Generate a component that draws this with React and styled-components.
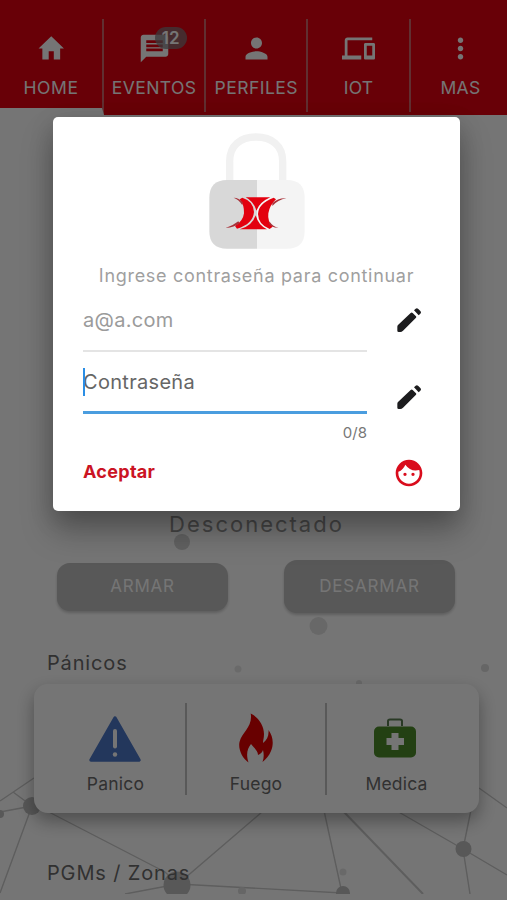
import { MdHome, MdMessage, MdPerson, MdDevices, MdMoreVert, MdFace } from 'react-icons/md';
import styled, { createGlobalStyle } from 'styled-components';

const TABS = [
    { label: 'HOME', icon: MdHome, active: true, iconWidth: 30.5, spacing: 0.6 },
    { label: 'EVENTOS', icon: MdMessage, badge: 12, spacing: 0.4 },
    { label: 'PERFILES', icon: MdPerson, spacing: 0.5 },
    { label: 'IOT', icon: MdDevices, spacing: 0.2 },
    { label: 'MAS', icon: MdMoreVert, spacing: 0.4 },
];

const Tab = ({ tab }) => {
    const Icon = tab.icon;
    return (
        <StyledTab $active={tab.active}>
            <StyledTabIcon $width={tab.iconWidth}>
                <Icon preserveAspectRatio='none' />
                {tab.badge && <StyledBadge>{tab.badge}</StyledBadge>}
            </StyledTabIcon>
            <StyledTabLabel $spacing={tab.spacing}>{tab.label}</StyledTabLabel>
        </StyledTab>
    );
}

const Network = () => (
    <StyledNetwork width='507' height='894' viewBox='0 0 507 894'>
        <g stroke='#cccccc' strokeWidth='1.4' fill='none'>
            <path d='M0 801 L34 778 M13 792 L32 806 L0 812 M32 806 L0 893' />
            <path d='M45 810 L165 872 L178 884 L262 812 M178 884 L125 894 M178 884 L342 893 L323 806' />
            <path d='M344 812 L423 894' strokeWidth='2' />
            <path d='M390 807 L463 849 L507 875 M463 849 L470 894 M463 849 L472 805 M479 788 L507 808' />
        </g>
        <g fill='#d3d3d3'>
            <circle cx='182' cy='542' r='8' />
            <circle cx='318.500' cy='626' r='9' fill='#e3e3e3' />
            <circle cx='238' cy='669' r='3.500' fill='#e8e8e8' />
            <circle cx='359' cy='683' r='3' fill='#e4e4e4' />
            <circle cx='485' cy='668' r='4' fill='#dedede' />
        </g>
        <g fill='#bfbfbf'>
            <circle cx='32' cy='806' r='9' />
            <circle cx='0' cy='814' r='4' />
            <circle cx='177' cy='885' r='13.500' />
            <circle cx='463.500' cy='849' r='8' />
            <circle cx='343' cy='893' r='7' />
            <circle cx='343' cy='872' r='3.500' fill='#e4e4e4' />
            <circle cx='242' cy='891' r='4' fill='#dedede' />
        </g>
    </StyledNetwork>
);

const LockLogo = () => (
    <StyledLock viewBox='50 30 300 366'>
        <path d='M118 190 V124 C118 76 150 51 197 51 C244 51 277 76 277 124 V190' fill='none' stroke='#f1f1f1' strokeWidth='22' />
        <path d='M200 180 H110 Q57 180 57 234 V333 Q57 386 110 386 H200 Z' fill='#d8d8d8' />
        <path d='M200 180 H290 Q343 180 343 234 V333 Q343 386 290 386 H200 Z' fill='#f4f4f4' />
        <g fill='#e3000f'>
            <path d='M166 232 H240 Q208 246 198 272 Q190 244 166 232 Z' />
            <path d='M196 286 Q204 316 230 328 H148 Q186 318 196 286 Z' />
            <path d='M156 233 Q190 244 191 276 Q188 312 140 326 L134 318 Q158 304 161 280 Q162 255 148 238 Z' />
            <path d='M250 233 Q204 250 203 282 Q204 314 238 327 L247 320 Q231 304 234 280 Q238 256 257 238 Z' />
        </g>
        <g fill='#a8323a'>
            <path d='M130 233 Q146 233 158 248 L155 254 Q146 239 130 233 Z' />
            <path d='M106 324 Q128 317 144 304 L148 310 Q132 322 106 324 Z' />
            <path d='M288 235 Q264 233 246 250 L246 258 Q262 240 288 235 Z' />
            <path d='M264 323 Q248 320 238 305 L236 311 Q246 324 264 323 Z' />
        </g>
    </StyledLock>
);

const PencilIcon = ({ top }) => (
    <StyledPencil $top={top} viewBox='380 54 72 72'>
        <path d='M381 110 Q381 107 383 105 L421 69 Q424 66 427 69 L437 79 Q439 81 437 83 L398 122 Q394 126 390 126 H385 Q381 126 381 122 Z' />
        <path d='M431 61 L436 56 Q440 53 444 57 L450 63 Q454 67 450 71 L445 76 Z' />
    </StyledPencil>
);

const PanicIcon = () => (
    <svg width='54' height='50' viewBox='0 0 54 50'>
        <path d='M26 5 L50 47 H2 Z' fill='#4e78c8' stroke='#4e78c8' strokeWidth='3.500' strokeLinejoin='round' />
        <path d='M26 18 V33.500' stroke='#fff' strokeWidth='4' strokeLinecap='round' />
        <circle cx='26' cy='41.500' r='2.200' fill='#fff' />
    </svg>
);

const FireIcon = () => (
    <svg width='36' height='50' viewBox='0 0 36 50'>
        <path
            d='M12.700 0.500 C20 4 26 12 26 21 C26 25 25 27 25 30 C29 27 31 23 30.500 17 C35 23 36 31 33 38 C31 43 28 46 24.500 49 C26 45 26 41 25 37 C24 40 22 41 20 42 C20 38 17 36 13 31 C9 36 8 42 10.500 49.500 C4 45 0 36 1.500 29 C4 19 15 14 12.700 0.500 Z'
            fill='#e30000'
        />
    </svg>
);

const MedicIcon = () => (
    <svg width='45' height='40' viewBox='0 0 45 40'>
        <path d='M14 8 V3 Q14 1.500 16 1.500 H26 Q28 1.500 28 3 V8' fill='none' stroke='#5a7d52' strokeWidth='2' />
        <rect x='0' y='8.500' width='42' height='31' rx='5' fill='#4c8b2b' />
        <path d='M17.500 15 H24.500 V20 H30 V27 H24.500 V32 H17.500 V27 H12.500 V20 H17.500 Z' fill='#fff' />
    </svg>
);

const PANICS = [
    { label: 'Panico', icon: PanicIcon },
    { label: 'Fuego', icon: FireIcon },
    { label: 'Medica', icon: MedicIcon },
];

const PasswordDialog = () => (
    <StyledDialog>
        <LockLogo />
        <StyledDialogTitle>Ingrese contraseña para continuar</StyledDialogTitle>
        <StyledFieldRow $height={53}>
            <StyledField>a@a.com</StyledField>
            <PencilIcon top={9} />
        </StyledFieldRow>
        <StyledFieldRow $height={62}>
            <StyledField $focused>
                <StyledCaret />
                Contraseña
            </StyledField>
            <PencilIcon top={33} />
        </StyledFieldRow>
        <StyledCounter>0/8</StyledCounter>
        <StyledActions>
            <StyledAccept>Aceptar</StyledAccept>
            <MdFace size={32} />
        </StyledActions>
    </StyledDialog>
);

const App = () => {
    return (
        <StyledPage>
            <GlobalStyle />
            <Network />
            <StyledTabBar>
                {TABS.map((tab) => <Tab key={tab.label} tab={tab} />)}
            </StyledTabBar>
            <StyledMain>
                <StyledStatus>Desconectado</StyledStatus>
                <StyledArmRow>
                    <StyledArmButton $height={48}>ARMAR</StyledArmButton>
                    <StyledArmButton $height={53}>DESARMAR</StyledArmButton>
                </StyledArmRow>
                <StyledSectionTitle>Pánicos</StyledSectionTitle>
                <StyledPanicCard>
                    {PANICS.map(({ label, icon: Icon }) => (
                        <StyledPanicItem key={label}>
                            <StyledPanicIcon><Icon /></StyledPanicIcon>
                            {label}
                        </StyledPanicItem>
                    ))}
                </StyledPanicCard>
                <StyledSectionTitle>PGMs / Zonas</StyledSectionTitle>
            </StyledMain>
            <StyledScrim>
                <PasswordDialog />
            </StyledScrim>
        </StyledPage>
    );
}

const GlobalStyle = createGlobalStyle`
    body {
        margin: 0;
        overflow: hidden;
        font-family: Inter, 'Liberation Sans', sans-serif;
    }

    * {
        box-sizing: border-box;
    }
`;

const StyledPage = styled.div`
    position: relative;
    width: 507px;
    height: 900px;
    overflow: hidden;
    background-color: #ffffff;
`;

const StyledNetwork = styled.svg`
    position: absolute;
    top: 0;
    left: 0;
`;

const StyledTabBar = styled.nav`
    position: relative;
    display: grid;
    grid-template-columns: 104px repeat(3, 102.2px) 100px;
    width: 507px;
    height: 115px;
    padding-top: 19px;
    overflow: hidden;
    background-color: #e20010;
`;

const StyledTab = styled.div`
    display: flex;
    flex-direction: column;
    align-items: center;
    height: ${({ $active }) => ($active ? 96 : 93)}px;
    padding-top: 12.5px;
    border-right: 2px solid #d4686c;
    border-bottom: ${({ $active }) => ($active ? '7px solid #ffffff' : 'none')};
    color: #ffffff;

    &:last-child {
        border-right: none;
    }
`;

const StyledTabIcon = styled.div`
    position: relative;
    height: 33px;

    > svg {
        display: block;
        width: ${({ $width }) => $width || 33}px;
        height: 33px;
    }
`;

const StyledBadge = styled.span`
    position: absolute;
    top: -5px;
    left: 17px;
    width: 32px;
    height: 22px;
    border-radius: 11px;
    background-color: rgba(130, 125, 130, 0.75);
    font-size: 17px;
    font-weight: 600;
    line-height: 22px;
    text-align: center;
`;

const StyledTabLabel = styled.span`
    margin-top: 12px;
    font-size: 17.5px;
    line-height: 22px;
    letter-spacing: ${({ $spacing }) => $spacing}px;
    white-space: nowrap;
`;

const StyledMain = styled.main`
    position: relative;
    display: flex;
    flex-direction: column;
    padding: 395px 28px 0 34px;
`;

const StyledStatus = styled.div`
    height: 30px;
    font-size: 22px;
    line-height: 29px;
    letter-spacing: 2px;
    text-align: center;
    color: #979797;
`;

const StyledArmRow = styled.div`
    display: flex;
    justify-content: space-between;
    align-items: center;
    height: 53px;
    margin: 20px 24px 0 23px;
`;

const StyledArmButton = styled.button`
    width: 171px;
    height: ${({ $height }) => $height}px;
    padding: 0 0 2px;
    border: none;
    border-radius: 13px;
    background-color: #bfbfbf;
    box-shadow: 0 2px 3px rgba(0, 0, 0, 0.2);
    font-family: inherit;
    font-size: 17px;
    letter-spacing: 0.8px;
    color: #ffffff;
`;

const StyledSectionTitle = styled.h2`
    height: 30px;
    margin: 35px 0 0 13px;
    font-size: 20px;
    font-weight: 400;
    line-height: 30px;
    letter-spacing: 0.85px;
    color: #6c6c6c;
`;

const StyledPanicCard = styled.section`
    display: grid;
    grid-template-columns: 153px 140px 1fr;
    width: 445px;
    height: 129px;
    margin: 6px 0 9px;
    padding: 19px 0;
    border-radius: 14px;
    background-color: #ffffff;
    box-shadow: 0 8px 18px rgba(0, 0, 0, 0.34);

    & + h2 {
        margin-top: 36px;
    }
`;

const StyledPanicItem = styled.div`
    display: flex;
    flex-direction: column;
    align-items: center;
    border-right: 2px solid #c3c3c3;
    font-size: 17.5px;
    line-height: 22px;
    letter-spacing: 0.2px;
    color: #6c6c6c;

    &:first-child {
        padding-left: 12px;
    }

    &:last-child {
        padding-right: 13px;
        border-right: none;
    }
`;

const StyledPanicIcon = styled.div`
    display: flex;
    justify-content: center;
    align-items: center;
    height: 70px;
`;

const StyledScrim = styled.div`
    position: absolute;
    inset: 0;
    padding: 117px 47px 0 53px;
    background-color: rgba(0, 0, 0, 0.54);
`;

const StyledDialog = styled.section`
    display: flex;
    flex-direction: column;
    width: 407px;
    height: 394px;
    padding: 13px 30px 0;
    border-radius: 5px;
    background-color: #ffffff;
    box-shadow: 0 20px 32px rgba(0, 0, 0, 0.26), 0 8px 24px rgba(0, 0, 0, 0.16);
`;

const StyledLock = styled.svg`
    align-self: center;
    width: 100px;
    height: 122px;
`;

const StyledDialogTitle = styled.p`
    margin: 12px 0 11px;
    font-size: 18px;
    line-height: 24px;
    letter-spacing: 0.7px;
    text-align: center;
    white-space: nowrap;
    color: #9f9f9f;
`;

const StyledFieldRow = styled.div`
    display: flex;
    justify-content: space-between;
    height: ${({ $height }) => $height}px;
`;

const StyledField = styled.div`
    position: relative;
    width: 284px;
    height: 100%;
    padding-top: ${({ $focused }) => ($focused ? 16 : 7)}px;
    border-bottom: ${({ $focused }) => ($focused ? '3px solid #4a9ddf' : '2px solid #e4e4e4')};
    font-size: 20px;
    line-height: 28px;
    letter-spacing: 0.3px;
    color: ${({ $focused }) => ($focused ? '#666666' : '#9b9b9b')};
`;

const StyledCaret = styled.span`
    position: absolute;
    top: 16px;
    left: 0;
    width: 2px;
    height: 28px;
    background-color: #2b8ee5;
`;

const StyledPencil = styled.svg`
    width: 24px;
    height: 24px;
    margin: ${({ $top }) => $top}px 9px 0 0;
    fill: #1c1c1e;
`;

const StyledCounter = styled.div`
    width: 284px;
    margin-top: 9px;
    font-size: 15px;
    line-height: 20px;
    text-align: right;
    color: #777777;
`;

const StyledActions = styled.div`
    display: flex;
    justify-content: space-between;
    align-items: center;
    margin-top: 14px;
    padding-right: 5.5px;
    color: #d90c1c;
`;

const StyledAccept = styled.button`
    padding: 0 0 3px;
    border: none;
    background: none;
    font-family: inherit;
    font-size: 18px;
    font-weight: 700;
    letter-spacing: 0.3px;
    color: #cb1424;
`;

export default App
